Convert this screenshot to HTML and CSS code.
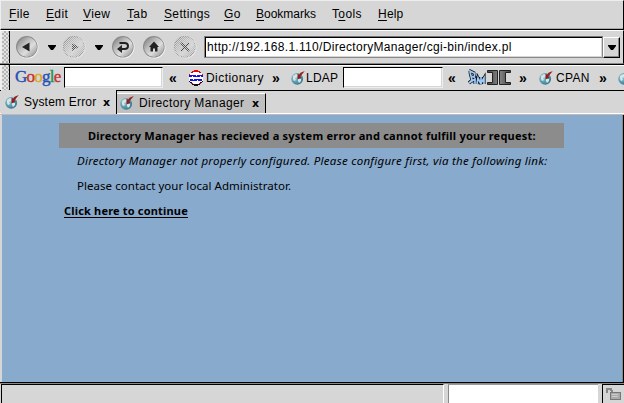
FILE: index.html
```html
<!DOCTYPE html>
<html lang="en">
<head>
<meta charset="utf-8">
<title>System Error</title>
<link rel="stylesheet" href="styles.css">
</head>
<body>
<svg class="defs" width="0" height="0">
  <defs>
    <linearGradient id="ball" x2="1" y2="1"><stop offset="0" stop-color="#777"/><stop offset=".35" stop-color="#bbb"/><stop offset=".6" stop-color="#ddd"/><stop offset="1" stop-color="#888"/></linearGradient>
    <radialGradient id="sea" cx="35%" cy="35%" r="70%"><stop offset="0" stop-color="#9fd0dc"/><stop offset="1" stop-color="#307890"/></radialGradient>
    <linearGradient id="metal"><stop offset="0" stop-color="#444"/><stop offset=".5" stop-color="#888"/><stop offset="1" stop-color="#444"/></linearGradient>
    <pattern id="dither" width="2" height="2" patternUnits="userSpaceOnUse"><path d="M0 0h1v1h-1zM1 1h1v1h-1z" fill="#d6d6d6"/></pattern>
    <symbol id="globe" viewBox="0 0 14 14">
      <circle cx="6.2" cy="7.8" r="5.9" fill="url(#sea)"/>
      <path d="M2 5l3-2 2 1-1 2-2 1 1 2-2 1-1-2zM7 8l3 0 0 2-2 2-1-2z" fill="#d5e6e4"/>
      <path d="M13.800 0L9.500 1.700 8.500 3.500 6.600 3 6.500 8.400 10.500 6.400 9.300 5.200 10.700 3.800z" fill="#941c1c"/>
    </symbol>
    <symbol id="button" viewBox="0 0 24 24">
      <circle cx="12.4" cy="12.4" r="11" fill="#f4f4f4"/><circle cx="11.8" cy="11.8" r="10.8" fill="#888"/><circle cx="12" cy="12" r="10" fill="url(#ball)"/>
    </symbol>
  </defs>
</svg>
<div class="window">
  <nav class="menu">
    <span class="m-file"><u>F</u>ile</span><span class="m-edit"><u>E</u>dit</span><span class="m-view"><u>V</u>iew</span><span class="m-tab"><u>T</u>ab</span><span class="m-settings"><u>S</u>ettings</span><span class="m-go"><u>G</u>o</span><span class="m-bookmarks"><u>B</u>ookmarks</span><span class="m-tools">T<u>o</u>ols</span><span class="m-help"><u>H</u>elp</span>
  </nav>
  <div class="toolbar">
    <i class="grip"></i>
    <svg class="back" width="24" height="24"><use href="#button"/><path d="M7 12l7.500-4.500v9z" fill="#222"/></svg>
    <svg class="drop" width="8" height="5"><path d="M0 0h8v1L5 5H3L0 1z"/></svg>
    <svg class="forward" width="24" height="24"><use href="#button" opacity=".8"/><path d="M17 12l-7-4v8z" fill="#555"/><circle cx="12" cy="12" r="11" fill="url(#dither)"/></svg>
    <svg class="drop" width="8" height="5"><path d="M0 0h8v1L5 5H3L0 1z"/></svg>
    <svg class="reload" width="24" height="24"><use href="#button"/><path d="M8.500 8h5q3.500 0 3.500 3t-3.500 3H9" fill="none" stroke="#222" stroke-width="2"/><path d="M6 14l5-4v8z" fill="#222"/></svg>
    <svg class="home" width="24" height="24"><use href="#button"/><path d="M12 6.500l5 5.500h-1.500v4.500h-2.500v-3h-2v3H8.500V12H7z" fill="#222"/></svg>
    <svg class="stop" width="24" height="24"><use href="#button" opacity=".8"/><path d="M8 8l8 8M16 8l-8 8" stroke="#444" stroke-width="2"/><circle cx="12" cy="12" r="11" fill="url(#dither)"/></svg>
    <div class="address"><span>http://192.168.1.110/DirectoryManager/cgi-bin/index.pl</span></div>
    <div class="pick"><svg width="8" height="5"><path d="M0 0h8v1L5 5H3L0 1z"/></svg></div>
  </div>
  <div class="bookmarks">
    <i class="grip"></i>
    <span class="google"><b class="blue">G</b><b class="red">o</b><b class="gold">o</b><b class="blue">g</b><b class="green">l</b><b class="red">e</b></span>
    <i class="field first"></i>
    <span class="arrows a1">«</span>
    <svg class="word" width="16" height="16" shape-rendering="crispEdges"><circle cx="8" cy="8" r="7.500" fill="#fff"/><path d="M3 3l3-2h4l3 2M1 5l1-1M15 5l-1-1" fill="none" stroke="#e00" stroke-width="1.300"/><path d="M1 11l2 2 3 2h4l3-2 2-2" fill="none" stroke="#111" stroke-width="1.400"/><path d="M3 13l2 1M11 14l2-1" stroke="#e00"/><path d="M1 6h14M2 10h12" stroke="#11e" stroke-width="2"/><path d="M4 6.500h1M8 5.500h1M12 6.500h1M5 9.500h1M9 10.500h1" stroke="#fff"/></svg>
    <span class="dictionary">Dictionary</span>
    <span class="arrows a2">»</span>
    <svg class="globe g1" width="14" height="14"><use href="#globe"/></svg>
    <span class="ldap">LDAP</span>
    <i class="field second"></i>
    <span class="arrows a3">«</span>
    <svg class="fm" width="44" height="17"><path d="M2 1.500l6 3M3 3l2 8-3 3M5 8l3-1M8 4L7 9M2 14l6-4v5M10 15l1-6 3 6V8M14 14l3-5v6" fill="none" stroke="#112" stroke-width="3.200"/><path d="M2 1.500l6 3M3 3l2 8-3 3M5 8l3-1M8 4L7 9M2 14l6-4v5M10 15l1-6 3 6V8M14 14l3-5v6" fill="none" stroke="#9fcaf2" stroke-width="1.700"/><path d="M20.500 1.500h10v14h-10v-2h5v-10h-5zM32.500 1.500h11v2h-5v10h5v2h-11z" fill="url(#metal)" stroke="#222"/></svg>
    <span class="arrows a4">»</span>
    <svg class="globe g2" width="14" height="14"><use href="#globe"/></svg>
    <span class="cpan">CPAN</span>
    <span class="arrows a5">»</span>
    <svg class="globe g3" width="14" height="14"><use href="#globe"/></svg>
  </div>
  <div class="tabs">
    <div class="tab active"><svg width="14" height="14"><use href="#globe"/></svg><span class="t1">System Error</span><b>x</b></div>
    <div class="tab other"><svg width="14" height="14"><use href="#globe"/></svg><span class="t2">Directory Manager</span><b>x</b></div>
  </div>
  <main>
    <h1><span>Directory Manager has recieved a system error and cannot fulfill your request:</span></h1>
    <p class="notice"><em>Directory Manager not properly configured. Please configure first, via the following link:</em></p>
    <p class="contact"><span>Please contact your local Administrator.</span></p>
    <a href="#">Click here to continue</a>
  </main>
  <footer>
    <div class="message"></div><div class="progress"></div>
    <div class="lock"><svg width="16" height="14" shape-rendering="crispEdges"><path d="M1.500 6V3.500l1-2h3l1 2V6" fill="none" stroke="#888" stroke-width="2"/><path d="M5 5h10v7H5z" fill="#aaa" stroke="#777"/><path d="M7 7.500h6M7 9.500h6" stroke="#ccc"/></svg></div>
  </footer>
</div>
</body>
</html>
```
FILE: styles.css
```css
* { box-sizing: border-box; }
body { margin: 0; font: 12px/14px "Liberation Sans", sans-serif; color: #000; background: #d6d6d6; overflow: hidden; }
.defs { display: block; }
.window { width: 624px; height: 403px; display: grid; grid-template-rows: 30px 34px 27px 24px 267px 21px; overflow: hidden; }
.window span, .window em, .window a { white-space: nowrap; }
svg { display: block; flex: none; }
u { text-underline-offset: 2px; text-decoration-thickness: 1px; }

.menu { display: flex; padding: 6px 0 0 8px; border-top: 1px solid #eee; border-left: 1px solid #eee; border-right: 1px solid #000; border-bottom: 1px solid #000; box-shadow: inset 0 -1px #aaa; letter-spacing: .35px; }
.m-file, .m-edit, .m-tab { width: 37px; }
.m-view { width: 44px; }
.m-settings { width: 60px; }
.m-go { width: 32px; }
.m-bookmarks { width: 76px; letter-spacing: 0; }
.m-tools { width: 46px; }
.m-help { letter-spacing: .2px; }

.toolbar { display: flex; align-items: center; border-top: 1px solid #fff; border-right: 1px solid #000; border-bottom: 1px solid #888; }
.grip { width: 10px; height: 100%; flex: none; border-right: 1px solid #000; border-left: 2px solid #eee; background: repeating-conic-gradient(#b4b4b4 0 25%, #e2e2e2 0 50%) 0 0 / 4px 4px; }
.back { margin: 0 9px 0 5px; }
.forward { margin: 0 9px 0 6px; }
.reload { margin-left: 8px; }
.home { margin-left: 7px; }
.stop { margin-left: 7px; }
.address { width: 399px; height: 22px; flex: none; margin-left: 7px; padding: 3px 2px; background: #fff; border: 1px solid #888; border-top-color: #777; box-shadow: inset 1px 1px #000, inset -1px -1px #d6d6d6; letter-spacing: .31px; }
.pick { width: 17px; height: 21px; display: grid; place-items: center; border: 1px solid #fff; border-right: 1px solid #000; border-bottom: 1px solid #000; box-shadow: inset -1px -1px #888; }

.bookmarks { display: flex; align-items: center; border-top: 1px solid #000; border-bottom: 1px solid #000; box-shadow: inset 0 1px #fff; overflow: hidden; }
.bookmarks > * { flex: none; }
.google { width: 50px; padding-left: 5px; margin-top: -1px; font: 17px/20px "Liberation Serif", serif; letter-spacing: -.75px; }
.google b { font-weight: 400; -webkit-text-stroke: .4px; }
.blue { color: #2450b8; } .red { color: #c83232; } .gold { color: #d8ac20; } .green { color: #249454; }
.field { height: 21px; margin-left: 4px; background: #fff; border-top: 1px solid #000; border-left: 1px solid #000; border-right: 1px solid #eee; border-bottom: 1px solid #eee; box-shadow: inset -1px -1px #d6d6d6; }
.first { width: 99px; }
.second { width: 100px; margin-left: 1px; }
.arrows { font: bold 14px/14px "Liberation Sans", sans-serif; }
.a1 { width: 25px; padding-left: 6px; }
.word { margin-right: 2px; }
.dictionary { width: 64px; letter-spacing: .45px; }
.a2 { width: 21px; padding-left: 2px; }
.ldap { width: 36px; margin-left: 1px; letter-spacing: .25px; }
.a3 { width: 24px; padding-left: 5px; }
.a4 { width: 28px; padding-left: 8px; }
.cpan { width: 42px; margin-left: 3px; letter-spacing: .3px; }
.a5 { width: 20px; padding-left: 1px; }

.tabs { display: flex; align-items: flex-end; border-bottom: 1px solid #bbb; box-shadow: inset 0 -1px #fff; padding-left: 1px; }
.tab { display: flex; border-right: 1px solid #000; }
.tab b { font: bold 11px/15px "DejaVu Sans", sans-serif; }
.active { width: 116px; height: 24px; padding: 5px 0 0 4px; background: #d6d6d6; }
.other { width: 149px; height: 20px; padding: 2px 0 0 3px; margin-bottom: 1px; background: #c0c0c0; border-top: 1px solid #fff; }
.t1 { width: 79px; margin-left: 5px; letter-spacing: .2px; }
.t2 { width: 113px; margin-left: 5px; letter-spacing: .4px; }

main { margin-right: 1px; padding: 8px 58px 0 57px; border-left: 2px solid #d6d6d6; border-right: 1px solid #888; background: #88aacd; font: 11px/15px "Noto Sans", sans-serif; box-shadow: 1px 0 #000; }
h1 { margin: 0; height: 25px; padding: 5px 0 0 29px; background: #8c8c8c; font: bold 11px/15px "Noto Sans", sans-serif; letter-spacing: .235px; }
p { margin: 0; height: 25px; padding: 5px 0 0 18px; }
.notice { font-size: 11.5px; letter-spacing: .27px; }
.contact { font-size: 11.5px; letter-spacing: .05px; }
main a { display: block; width: max-content; margin: 5px 0 0 5px; color: #000; font-weight: bold; text-underline-offset: 2px; letter-spacing: .18px; }

footer { display: flex; border-top: 1px solid #000; background: #d6d6d6; box-shadow: inset 0 1px #888; padding-top: 1px; }
.message { width: 443px; margin-left: 1px; border-top: 1px solid #000; border-left: 1px solid #000; border-right: 1px solid #fff; }
.progress { width: 150px; margin-left: 4px; background: #fff; border-top: 1px solid #999; border-left: 1px solid #888; }
.lock { width: 22px; margin-left: 4px; padding: 2px 0 0 2px; border-top: 1px solid #000; border-left: 1px solid #000; }
```
